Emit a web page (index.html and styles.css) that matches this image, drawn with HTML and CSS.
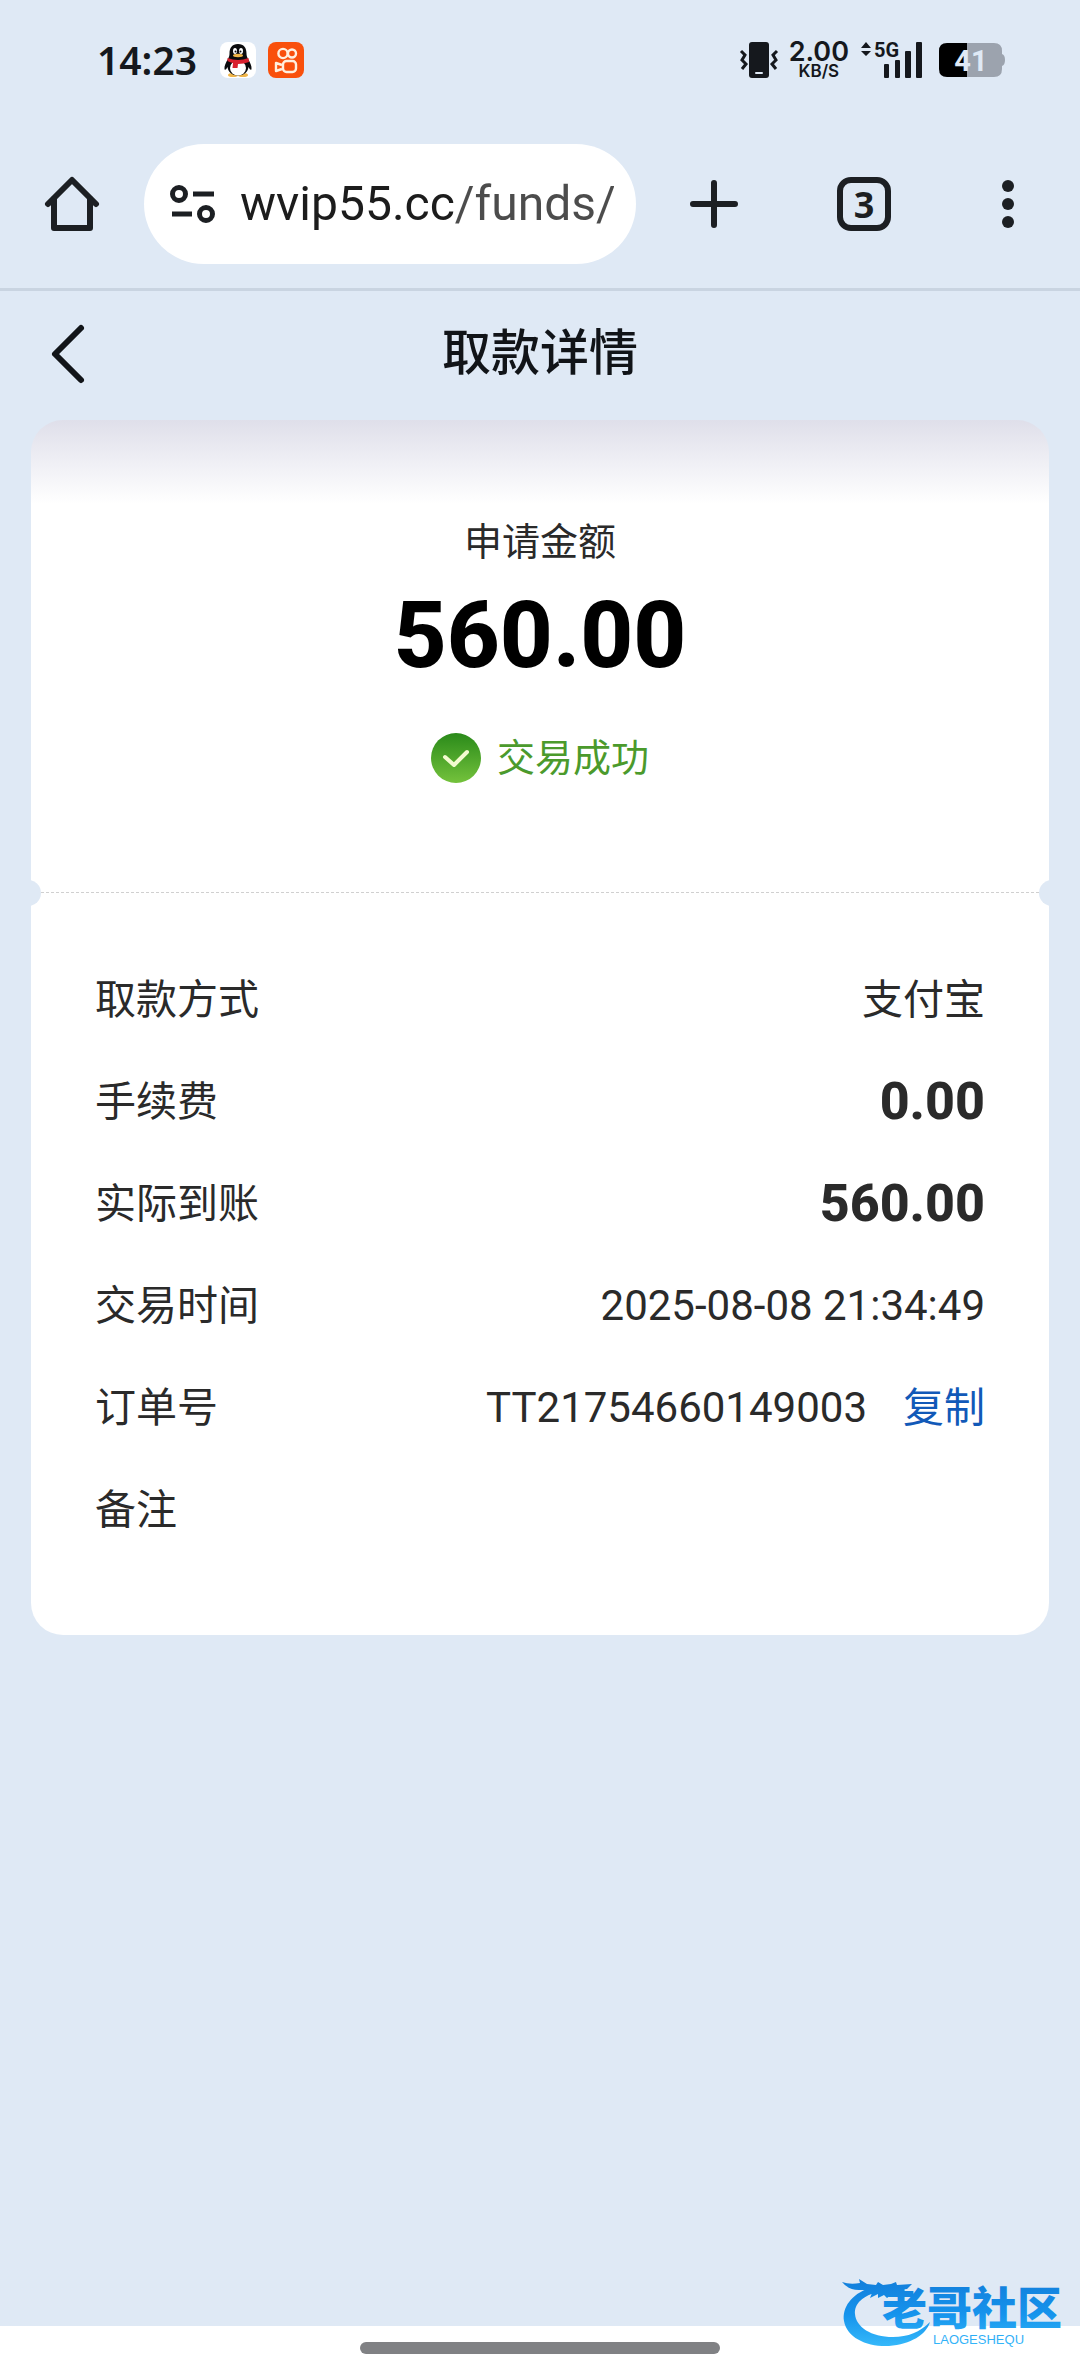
FILE: index.html
```html
<!DOCTYPE html>
<html lang="zh-CN">
<head>
    <meta charset="UTF-8">
    <meta name="viewport" content="width=device-width, initial-scale=1.0">
    <title>取款详情</title>
    <link rel="stylesheet" href="styles.css">
</head>
<body>
    <div class="status-bar">
        <div class="status-left">
            <span class="clock">14:23</span>
            <!-- QQ -->
            <svg class="app-icon" width="36" height="36" viewBox="0 0 36 36">
                <rect width="36" height="36" rx="8" fill="#fff"/>
                <ellipse cx="13" cy="33" rx="5" ry="2" fill="#f0b548"/>
                <ellipse cx="23" cy="33" rx="5" ry="2" fill="#f0b548"/>
                <path d="M18 2c-6 0-8.500 4-8.500 9.500 0 2-.5 3.500-1.500 5.500-2 3.500-4 7-3.500 10 .5 2 2 0 3-2 .5 5 5 8.500 10.500 8.500S28 30 28.500 25c1 2 2.500 4 3 2 .5-3-1.500-6.500-3.500-10-1-2-1.500-3.500-1.500-5.500C26.500 6 24 2 18 2z" fill="#0b0b0d"/>
                <ellipse cx="18" cy="26" rx="8" ry="7.500" fill="#fff"/>
                <ellipse cx="15" cy="9" rx="2" ry="3" fill="#fff"/>
                <ellipse cx="21" cy="9" rx="2" ry="3" fill="#fff"/>
                <circle cx="15.500" cy="9.500" r="1" fill="#0b0b0d"/>
                <circle cx="20.500" cy="9.500" r="1" fill="#0b0b0d"/>
                <ellipse cx="18" cy="13.500" rx="5" ry="1.700" fill="#f0b548"/>
                <path d="M7.500 16q10.500 4 21 0l.5 4q-5 2-11 2l-.5 4h-5l.5-5q-3-.5-5.500-2z" fill="#d9202e"/>
            </svg>
            <!-- Kuaishou -->
            <svg class="app-icon" width="36" height="36" viewBox="0 0 36 36">
                <rect width="36" height="36" rx="8" fill="#f9500c"/>
                <g fill="none" stroke="#fff0df" stroke-width="2.400" stroke-linejoin="round">
                    <circle cx="15" cy="11.500" r="4.600"/>
                    <circle cx="24" cy="11.500" r="4"/>
                    <rect x="15" y="19" width="13" height="11" rx="3.500"/>
                    <path d="M14 23l-6-2v8l6-2"/>
                </g>
            </svg>
        </div>
        <div class="status-right">
            <svg class="vibrate" width="38" height="36" viewBox="0 0 38 36">
                <rect x="9" width="20" height="36" rx="3" fill="#15181d"/>
                <rect x="15" y="30" width="8" height="2" rx="1" fill="#dfe9f5"/>
                <path d="M1 9l4 4-3 5 4 4-4 5M37 9l-4 4 3 5-4 4 4 5" fill="none" stroke="#15181d" stroke-width="3"/>
            </svg>
            <div class="net-speed">
                <span class="speed">2.00</span>
                <span class="unit">KB/S</span>
            </div>
            <svg class="signal" width="62" height="36" viewBox="0 0 62 36">
                <path d="M6 0l5 6H1zM6 14l5-5H1z" fill="#15181d"/>
                <text x="14" y="15" class="signal-type">5G</text>
                <g fill="#15181d">
                    <rect x="24" y="22" width="5" height="14" rx="1"/>
                    <rect x="35" y="18" width="5" height="18" rx="1"/>
                    <rect x="45" y="9" width="6" height="27" rx="1"/>
                    <rect x="56" y="0" width="6" height="36" rx="1"/>
                </g>
            </svg>
            <svg class="battery" width="66" height="34" viewBox="0 0 66 34">
                <path d="M28 0h27q8 0 8 8v3q3 1 3 6t-3 6v3q0 8-8 8H28z" fill="#9ca3ae"/>
                <path d="M28 0H8Q0 0 0 8v18q0 8 8 8h20z" fill="#000"/>
                <text x="32" y="28" text-anchor="middle" class="battery-level">41</text>
            </svg>
        </div>
    </div>

    <div class="toolbar">
        <button class="tool-btn" aria-label="主页">
            <svg width="54" height="54" viewBox="0 0 54 54" fill="none" stroke="#1c1f23" stroke-width="6" stroke-linejoin="round" stroke-linecap="round">
                <path d="M3 27L27 3l24 24"/>
                <path d="M9 22v29h36V22"/>
            </svg>
        </button>
        <label class="address">
            <svg width="46" height="40" viewBox="0 0 46 40" fill="none" stroke="#1c1f23" stroke-width="5">
                <circle cx="9" cy="10" r="6.500"/>
                <path d="M23 10h21M2 30h20"/>
                <circle cx="36" cy="30" r="6.500"/>
            </svg>
            <input class="url" type="text" value="wvip55.cc/funds/" aria-label="网址">
        </label>
        <button class="tool-btn new-tab" aria-label="新标签页">
            <svg width="48" height="48" viewBox="0 0 48 48" stroke="#1c1f23" stroke-width="6" stroke-linecap="round">
                <path d="M24 3v42M3 24h42"/>
            </svg>
        </button>
        <button class="tool-btn" aria-label="标签页">
            <span class="tab-count">3</span>
        </button>
        <button class="tool-btn" aria-label="菜单">
            <svg width="12" height="48" viewBox="0 0 12 48" fill="#1c1f23">
                <circle cx="6" cy="6" r="6"/>
                <circle cx="6" cy="24" r="6"/>
                <circle cx="6" cy="42" r="6"/>
            </svg>
        </button>
    </div>

    <header class="page-header">
        <button class="back-btn" aria-label="返回">
            <svg width="34" height="58" viewBox="0 0 34 58" fill="none" stroke="#111418" stroke-width="6" stroke-linecap="round" stroke-linejoin="round">
                <path d="M30 3L4 29l26 26"/>
            </svg>
        </button>
        <h1>取款详情</h1>
    </header>

    <main class="card">
        <section class="summary">
            <p class="summary-label">申请金额</p>
            <p class="amount">560.00</p>
            <p class="state">
                <svg width="50" height="50" viewBox="0 0 50 50">
                    <defs>
                        <linearGradient id="okFill" x1="0" y1="0" x2="0" y2="1">
                            <stop offset="0" stop-color="#2a8a1a"/>
                            <stop offset="1" stop-color="#74c23c"/>
                        </linearGradient>
                    </defs>
                    <circle cx="25" cy="25" r="25" fill="url(#okFill)"/>
                    <path d="M14 24l9 8 13-13" fill="none" stroke="#f3fbd0" stroke-width="4" stroke-linecap="round" stroke-linejoin="round"/>
                </svg>
                <span>交易成功</span>
            </p>
        </section>
        <dl class="details">
            <div class="row">
                <dt>取款方式</dt>
                <dd>支付宝</dd>
            </div>
            <div class="row">
                <dt>手续费</dt>
                <dd class="money">0.00</dd>
            </div>
            <div class="row">
                <dt>实际到账</dt>
                <dd class="money">560.00</dd>
            </div>
            <div class="row">
                <dt>交易时间</dt>
                <dd class="number">2025-08-08 21:34:49</dd>
            </div>
            <div class="row">
                <dt>订单号</dt>
                <dd>
                    <span class="number" id="orderNo">TT21754660149003</span>
                    <button class="copy-btn" onclick="copyOrder()">复制</button>
                </dd>
            </div>
            <div class="row">
                <dt>备注</dt>
                <dd></dd>
            </div>
        </dl>
    </main>

    <footer class="gesture-bar">
        <span class="gesture-pill"></span>
        <svg class="brand" width="228" height="76" viewBox="0 0 228 76">
            <defs>
                <linearGradient id="brandFill" gradientUnits="userSpaceOnUse" x1="0" y1="8" x2="0" y2="72">
                    <stop offset="0" stop-color="#1380dc"/>
                    <stop offset="0.500" stop-color="#1593ec"/>
                    <stop offset="1" stop-color="#35b8fa"/>
                </linearGradient>
            </defs>
            <g fill="url(#brandFill)">
                <path d="M28 14C9 20 0 34 2 47c3 17 23 26 45 25 22-2 37-11 41-24-10 10-22 15-37 15C29 63 14 53 13 40c-1-10 8-19 24-22z"/>
                <path d="M0 8q8 3 18 1l-1-4 8 5 9 1 2-3 5 3 8-1 5-2 1 3 15-1-5 5-9 1 9 4-9 0 3 4-10-3-4 3-3-3-6 3v-4l-8 4 2-5-7 1 3-4-7 0Q7 17 0 8z"/>
                <text x="40" y="51" class="brand-name">老哥社区</text>
                <text x="91" y="70" class="brand-sub">LAOGESHEQU</text>
            </g>
        </svg>
    </footer>

    <script>
        function copyOrder() {
            const orderNo = document.getElementById('orderNo').textContent;
            navigator.clipboard.writeText(orderNo);
        }
    </script>
</body>
</html>
```

FILE: styles.css
```css
* {
    box-sizing: border-box;
}
body {
    margin: 0;
    min-height: 100vh;
    display: flex;
    flex-direction: column;
    background: #dfe9f5;
    color: #2a2a2a;
    font-family: Roboto, "Noto Sans CJK SC", sans-serif;
    font-size: 41px;
}
button {
    padding: 0;
    border: none;
    background: none;
    color: inherit;
    font: inherit;
    cursor: pointer;
}
svg {
    display: block;
    flex: none;
    overflow: visible;
}

/* status bar */
.status-bar {
    display: flex;
    justify-content: space-between;
    align-items: center;
    height: 120px;
    padding: 0 75px 0 97px;
    color: #15181d;
    font-family: Inter, sans-serif;
    font-weight: 600;
}
.status-left {
    display: flex;
    align-items: center;
    gap: 12px;
}
.clock {
    margin-right: 11px;
    font-family: "Noto Sans", sans-serif;
    font-size: 39px;
    line-height: 48px;
}
.status-right {
    display: flex;
    align-items: center;
}
.net-speed {
    display: flex;
    flex-direction: column;
    align-items: center;
    margin: 0 11px;
}
.speed {
    font-size: 27px;
    line-height: 22px;
}
.unit {
    font-size: 17px;
    line-height: 16px;
}
.signal-type {
    font-family: Roboto, sans-serif;
    font-size: 20px;
    font-weight: 700;
    fill: #15181d;
}
.battery {
    margin-left: 17px;
}
.battery-level {
    font-family: Roboto, sans-serif;
    font-size: 29px;
    font-weight: 700;
    fill: #dfe9f5;
}

/* browser toolbar */
.toolbar {
    display: flex;
    align-items: center;
    height: 171px;
    border-bottom: 3px solid #c9d4e1;
}
.tool-btn {
    display: flex;
    justify-content: center;
    align-items: center;
    width: 144px;
    height: 120px;
}
.new-tab {
    width: 156px;
}
.address {
    flex: 1;
    min-width: 0;
    display: flex;
    align-items: center;
    gap: 24px;
    height: 120px;
    padding: 0 22px 0 26px;
    border-radius: 60px;
    background: #fff;
}
.url {
    flex: 1;
    min-width: 0;
    padding: 0;
    border: none;
    outline: none;
    /* host is darker than the path */
    background: linear-gradient(90deg, #1c1c1c 214px, #4c4c4c 214px);
    background-clip: text;
    -webkit-background-clip: text;
    color: transparent;
    font-family: Roboto, sans-serif;
    font-size: 48px;
    line-height: 64px;
}
.tab-count {
    display: flex;
    justify-content: center;
    align-items: center;
    width: 54px;
    height: 54px;
    border: 6px solid #1c1f23;
    border-radius: 14px;
    color: #1c1f23;
    font-family: "Noto Sans", sans-serif;
    font-size: 36px;
    font-weight: 700;
}

/* page header */
.page-header {
    display: grid;
    grid-template-columns: 136px 1fr 136px;
    align-items: center;
    height: 129px;
    padding-bottom: 4px;
    color: #111418;
}
.back-btn {
    display: flex;
    justify-content: center;
}
.page-header h1 {
    margin: 0;
    text-align: center;
    font-size: 49px;
    font-weight: 500;
    line-height: 64px;
}

/* card */
.card {
    margin: 0 31px;
    border-radius: 32px;
    overflow: hidden;
    background: linear-gradient(#dfdfea, #fff 84px);
}
.summary {
    position: relative;
    padding: 94px 0 106px;
    border-bottom: 1px dashed #d0d0d0;
    text-align: center;
}
.summary::before,
.summary::after {
    content: "";
    position: absolute;
    bottom: -14px;
    width: 26px;
    height: 26px;
    border-radius: 50%;
    background: #dfe9f5;
}
.summary::before {
    left: -16px;
}
.summary::after {
    right: -16px;
}
.summary p {
    margin: 0;
}
.summary-label {
    font-size: 38px;
    line-height: 56px;
}
.amount {
    color: #000;
    font-size: 92px;
    font-weight: 800;
    line-height: 132px;
}
.state {
    display: flex;
    justify-content: center;
    align-items: center;
    gap: 16px;
    padding-top: 28px;
    color: #4b9a2c;
    font-size: 38px;
    line-height: 56px;
}
.details {
    margin: 0;
    padding: 56px 64px 74px;
}
.row {
    display: flex;
    justify-content: space-between;
    align-items: center;
    height: 102px;
    line-height: 60px;
}
.row dd {
    display: flex;
    align-items: center;
    gap: 36px;
    margin: 0;
}
.row .number {
    font-size: 42px;
}
.row .money {
    font-size: 52px;
    font-weight: 800;
}
.copy-btn {
    color: #1159b8;
}

/* bottom bar */
.gesture-bar {
    position: relative;
    display: flex;
    justify-content: center;
    align-items: center;
    height: 48px;
    margin-top: auto;
    padding-bottom: 4px;
    background: #fff;
}
.gesture-pill {
    width: 360px;
    height: 12px;
    border-radius: 6px;
    background: #808184;
}
.brand {
    position: absolute;
    right: 10px;
    bottom: 24px;
}
.brand-name {
    font-family: "Noto Sans CJK SC", sans-serif;
    font-size: 45px;
    font-weight: 900;
}
.brand-sub {
    font-family: "Liberation Sans", sans-serif;
    font-size: 13px;
}
```
